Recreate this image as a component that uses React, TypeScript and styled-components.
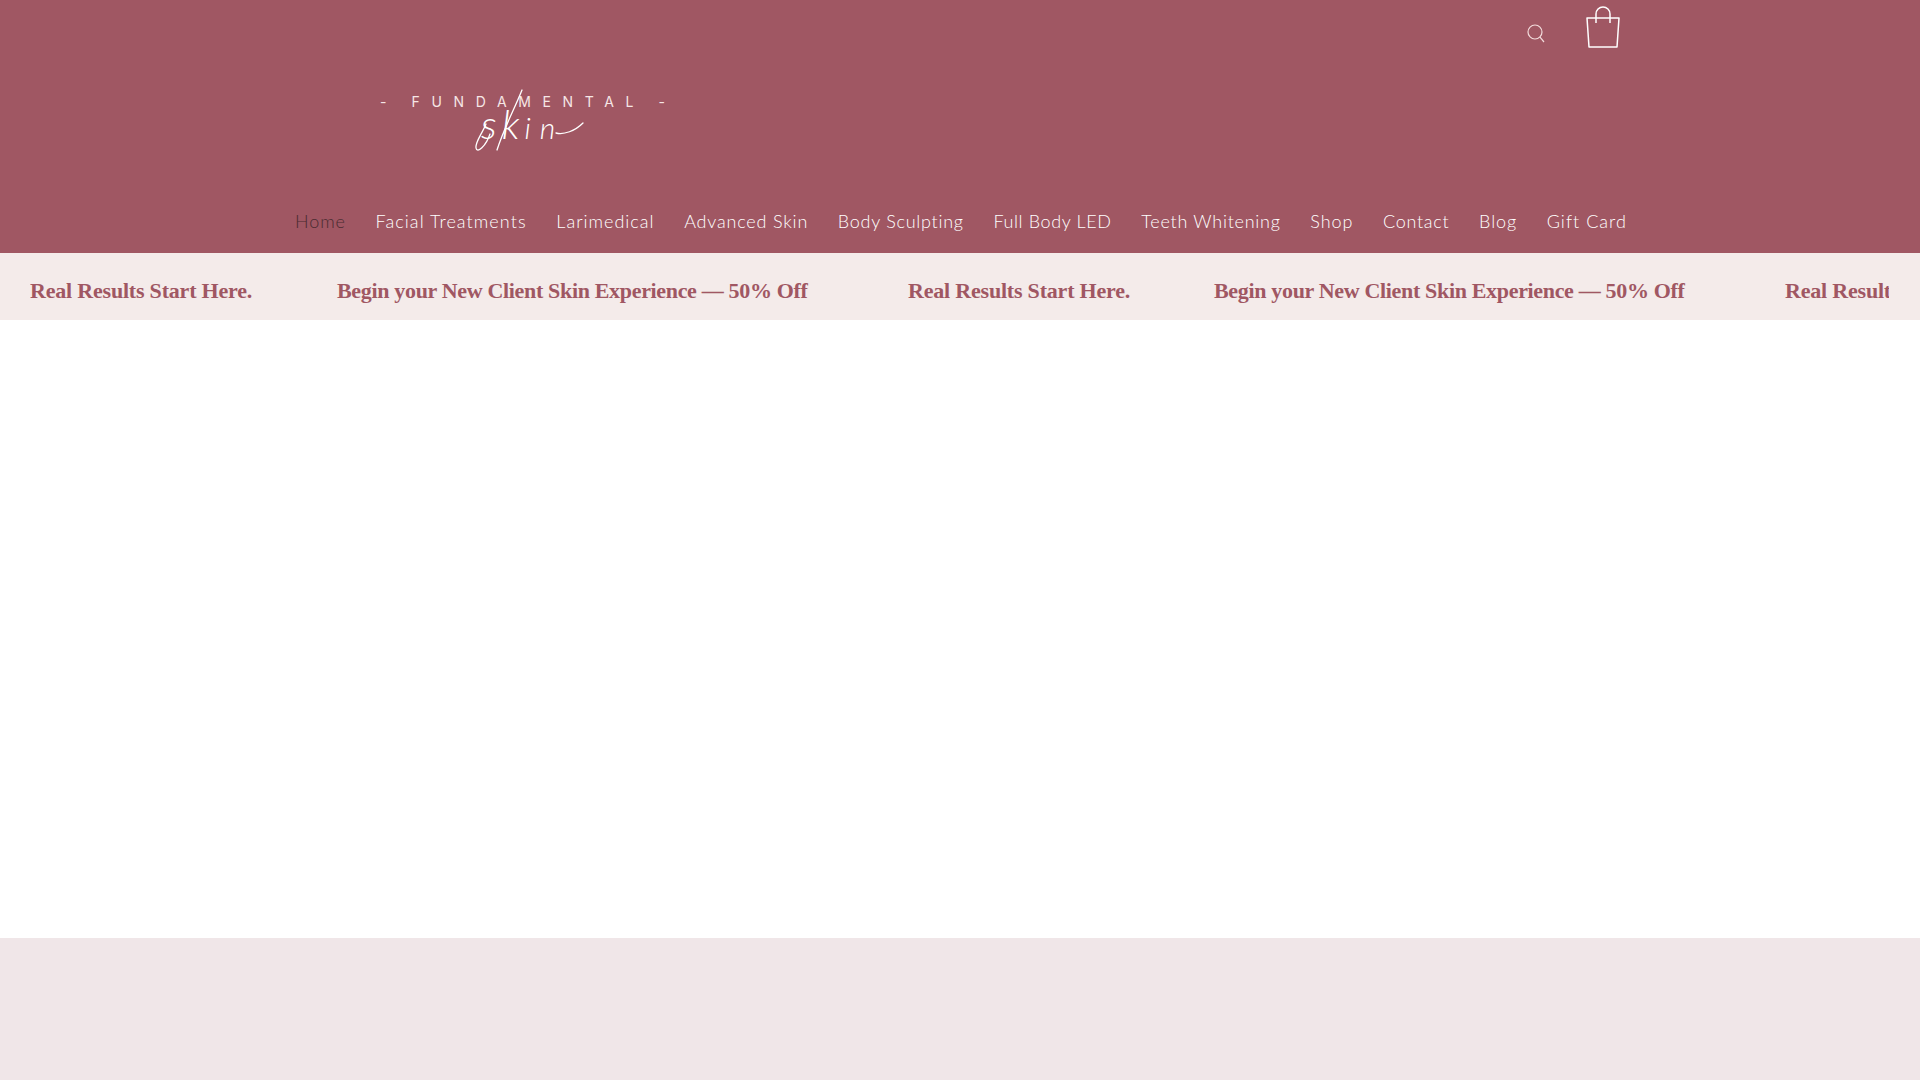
import React from "react";
import styled, { createGlobalStyle } from "styled-components";

const Global = createGlobalStyle`
  html, body { margin: 0; padding: 0; background: #fff; }
  body { overflow: hidden; }
`;
const Page = styled.div`
  display: flex;
  flex-direction: column;
  height: 1080px;
  width: 1920px;
  overflow: hidden;
`;
const Header = styled.header`
  height: 253px;
  flex: none;
  background: #a05763;
  display: flex;
  flex-direction: column;
`;
const TopRow = styled.div`
  height: 62px;
  display: flex;
  align-items: flex-start;
  justify-content: flex-end;
  padding-right: 300px;
`;
const SearchButton = styled.div`
  width: 22px;
  height: 22px;
  margin-top: 23px;
  margin-right: 38px;
  color: #f3dcdc;
`;
const BagButton = styled.div`
  width: 34px;
  height: 42px;
  margin-top: 6px;
  color: #fff;
`;
const LogoRow = styled.div`
  height: 147px;
  padding-left: 380px;
`;
const Logo = styled.div`
  position: relative;
  width: 290px;
  height: 92px;
`;
const Brand = styled.div`
  position: absolute;
  left: 0;
  top: 33px;
  width: 285px;
  display: flex;
  justify-content: space-between;
  font: 400 14px/14px "Inter", "Open Sans", sans-serif;
  color: #f6e6e6;
`;
const BrandWord = styled.span`
  letter-spacing: 0.83em;
  margin-right: -0.83em;
`;
const Script = styled.div`
  position: absolute;
  left: 101px;
  top: 46px;
  display: flex;
  align-items: baseline;
  height: 32px;
  font: italic 300 30px/32px "Lato", sans-serif;
  letter-spacing: 9px;
  color: #fff;
`;
const ScriptCap = styled.span`
  font-size: 40px;
  letter-spacing: 5px;
`;
const Flourish = styled.svg`
  position: absolute;
  left: 0;
  top: 0;
  color: #fff;
`;
const Nav = styled.nav`
  display: flex;
  justify-content: flex-start;
  gap: 29.7px;
  padding-left: 295px;
`;
const NavItem = styled.a<{ $active?: boolean; $track: number }>`
  font: 300 18px/24px "Lato", sans-serif;
  letter-spacing: ${(p) => p.$track}px;
  color: ${(p) => (p.$active ? "#4a2b31" : "#ffffff")};
`;
const Banner = styled.div`
  height: 67px;
  flex: none;
  background: #f4ebea;
  display: flex;
  align-items: center;
  padding-left: 30px;
`;
const Track = styled.div`
  width: 1859px;
  overflow: hidden;
  display: flex;
  white-space: nowrap;
  padding-top: 8px;
`;
const Slogan = styled.span<{ $w: number; $track: number }>`
  flex: none;
  width: ${(p) => p.$w}px;
  font: 700 22px/30px "Liberation Serif", serif;
  letter-spacing: ${(p) => p.$track}px;
  color: #a05763;
`;
const Main = styled.main`
  flex: none;
  height: 618px;
  background: #fff;
`;
const Footer = styled.footer`
  flex: 1;
  background: #f0e6e8;
`;

const items: [string, number][] = [
  ["Facial Treatments", 1.08],
  ["Larimedical", 1.0],
  ["Advanced Skin", 0.81],
  ["Body Sculpting", 0.73],
  ["Full Body LED", 0.63],
  ["Teeth Whitening", 0.74],
  ["Shop", 0.9],
  ["Contact", 0.73],
  ["Blog", 0.9],
  ["Gift Card", 1.03],
];

export default function App() {
  return (
    <Page>
      <Global />
      <Header>
        <TopRow>
          <SearchButton>
            <svg width="22" height="22" viewBox="0 0 22 22" fill="none" stroke="currentColor" strokeWidth="1.2">
              <circle cx="9" cy="9" r="7" />
              <path d="M14 14.2 L18 19" />
            </svg>
          </SearchButton>
          <BagButton>
            <svg width="34" height="42" viewBox="0 0 34 42" fill="none" stroke="currentColor" strokeWidth="1.5" strokeLinejoin="round">
              <path d="M1 12 H33 L31 41 H3 Z" />
              <path d="M10 17 V8 A7 7 0 0 1 24 8 V17" />
            </svg>
          </BagButton>
        </TopRow>
        <LogoRow>
          <Logo>
            <Brand>
              <span>-</span>
              <BrandWord>FUNDAMENTAL</BrandWord>
              <span>-</span>
            </Brand>
            <Script>
              <ScriptCap>sk</ScriptCap>in
            </Script>
            <Flourish width="290" height="92" viewBox="0 0 290 92" fill="none" stroke="currentColor" strokeWidth="1.3" strokeLinecap="round">
              <path d="M142 28 C134 48 124 66 117 88" />
              <path d="M106 62 C102 72 95 80 96 86 C97 92 106 84 110 72" />
              <path d="M176 71 C184 73 195 69 203 61" />
            </Flourish>
          </Logo>
        </LogoRow>
        <Nav>
          <NavItem $active $track={0.9}>Home</NavItem>
          {items.map(([t, track]) => (
            <NavItem key={t} $track={track}>{t}</NavItem>
          ))}
        </Nav>
      </Header>
      <Banner>
        <Track>
          <Slogan $w={307} $track={-0.2}>Real Results Start Here.</Slogan>
          <Slogan $w={571} $track={-0.33}>Begin your New Client Skin Experience — 50% Off</Slogan>
          <Slogan $w={306} $track={-0.2}>Real Results Start Here.</Slogan>
          <Slogan $w={571} $track={-0.33}>Begin your New Client Skin Experience — 50% Off</Slogan>
          <Slogan $w={306} $track={-0.2}>Real Results Start Here.</Slogan>
        </Track>
      </Banner>
      <Main />
      <Footer />
    </Page>
  );
}
